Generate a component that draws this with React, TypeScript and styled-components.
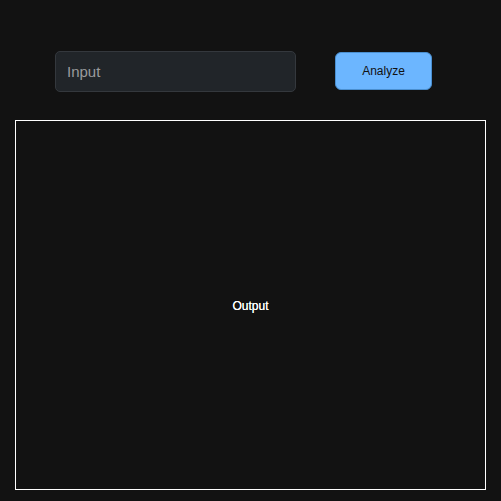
import React from "react";
import styled, { createGlobalStyle } from "styled-components";

const Global = createGlobalStyle`
  html, body { margin: 0; padding: 0; background: #121212; }
  body { font-family: "Liberation Sans", Arial, sans-serif; }
  * { box-sizing: border-box; }
`;

const Page = styled.div`
  width: 501px;
  height: 501px;
  display: flex;
  flex-direction: column;
  background: #121212;
`;

const TopRow = styled.div`
  height: 120px;
  display: flex;
  align-items: center;
  padding: 22px 0 0 55px;
  gap: 39px;
`;

const Input = styled.input`
  width: 241px;
  height: 41px;
  background: #212529;
  border: 1px solid #34383d;
  border-radius: 5px;
  padding: 0 11px;
  font-family: "Liberation Sans", Arial, sans-serif;
  font-size: 15px;
  color: #dee2e6;
  outline: none;
  &::placeholder { color: #9a9b9d; }
`;

const Button = styled.button`
  width: 97px;
  height: 38px;
  background: #6cb6ff;
  border: 1px solid #4a8fd0;
  border-radius: 6px;
  font-family: "Liberation Sans", Arial, sans-serif;
  font-size: 12px;
  color: #121212;
  cursor: pointer;
`;

const OutputPanel = styled.div`
  margin: 0 15px 11px 15px;
  height: 370px;
  border: 1px solid #ffffff;
  display: flex;
  align-items: center;
  justify-content: center;
  padding-top: 2px;
  color: #ffffff;
  font-size: 12px;
  font-weight: 500;
  text-shadow: 0 0 0.4px #ffffff;
`;

export default function App() {
  return (
    <>
      <Global />
      <Page>
        <TopRow>
          <Input placeholder="Input" />
          <Button>Analyze</Button>
        </TopRow>
        <OutputPanel>Output</OutputPanel>
      </Page>
    </>
  );
}
